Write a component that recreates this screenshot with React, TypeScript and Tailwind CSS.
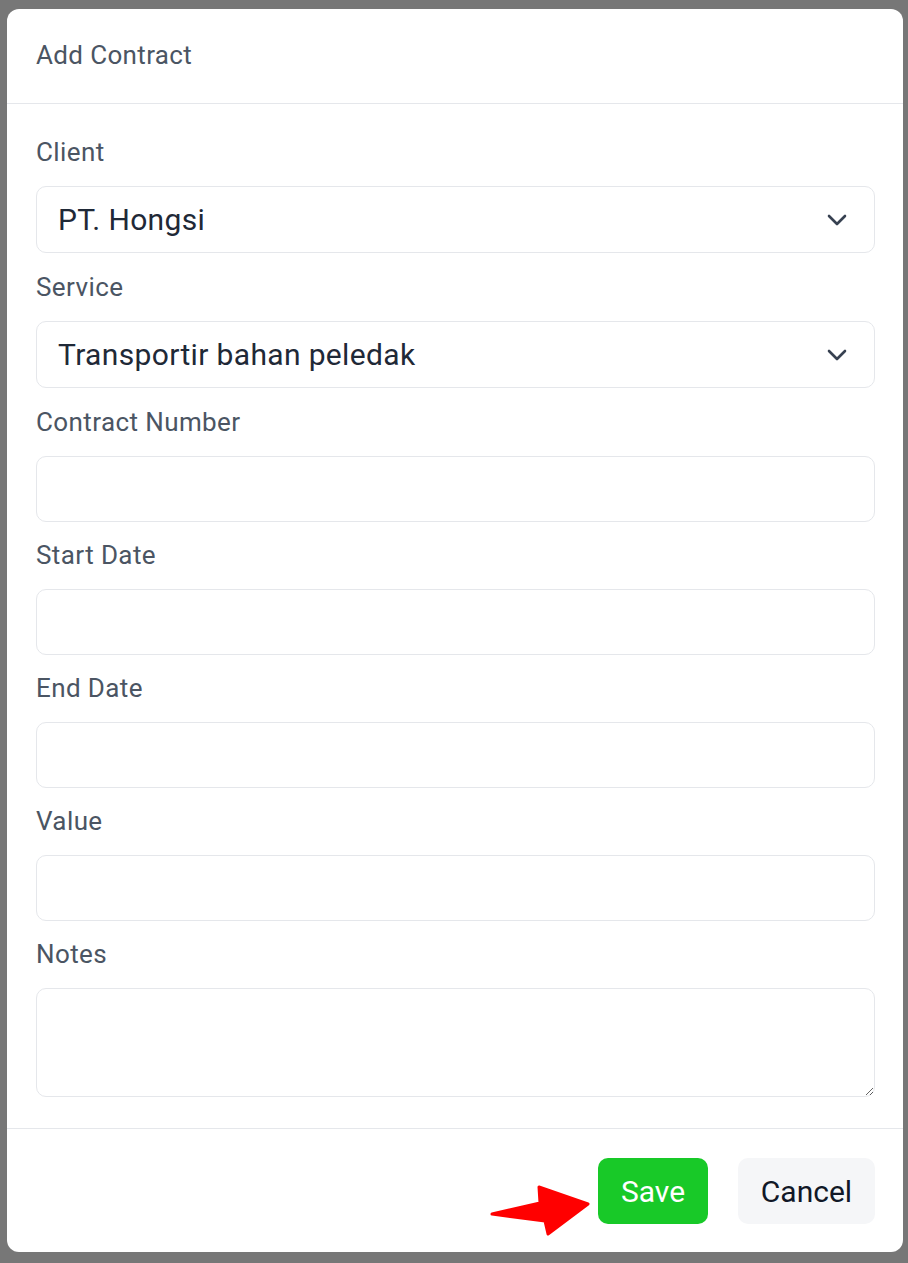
import { useState } from "react";

const fields = [
  { label: "Contract Number", name: "number" },
  { label: "Start Date", name: "start" },
  { label: "End Date", name: "end" },
  { label: "Value", name: "value" },
];

function Chevron() {
  return (
    <svg
      width="20"
      height="12"
      viewBox="0 0 20 12"
      fill="none"
      className="pointer-events-none absolute right-[28px] top-1/2 -translate-y-1/2"
    >
      <path
        d="M2 2l8 8 8-8"
        stroke="#374151"
        strokeWidth="2.6"
        strokeLinecap="round"
        strokeLinejoin="round"
      />
    </svg>
  );
}

export default function App() {
  const [form, setForm] = useState({
    client: "PT. Hongsi",
    service: "Transportir bahan peledak",
    number: "",
    start: "",
    end: "",
    value: "",
    notes: "",
  });

  function handleChange(
    event: React.ChangeEvent<HTMLInputElement | HTMLSelectElement | HTMLTextAreaElement>
  ) {
    const { name, value } = event.target;
    setForm((prev) => ({ ...prev, [name]: value }));
  }

  return (
    <div className="min-h-screen bg-[#777777] pt-[9px] pl-[7px] font-['Roboto',sans-serif]">
      <div className="flex h-[1243px] w-[896px] flex-col rounded-[12px] bg-white">
        <div className="flex h-[95px] items-center border-b border-[#e5e7eb] px-[29px] pb-[2px]">
          <h2 className="text-[26px] tracking-[0.35px] text-[#4b5563]">Add Contract</h2>
        </div>

        <form className="flex flex-1 flex-col pl-[29px] pr-[28px] pt-[32px]">
          <label className="mb-[17px] h-[33px] text-[26px] leading-[33px] tracking-[0.4px] text-[#4b5563]">
            Client
          </label>
          <div className="relative mb-[18px]">
            <select
              name="client"
              value={form.client}
              onChange={handleChange}
              className="h-[67px] w-full appearance-none rounded-[10px] border border-[#e5e7eb] bg-white pl-[21px] text-[30px] tracking-[0.35px] text-[#1f2937] outline-none"
            >
              <option>PT. Hongsi</option>
            </select>
            <Chevron />
          </div>

          <label className="mb-[17px] h-[33px] text-[26px] leading-[33px] tracking-[0.4px] text-[#4b5563]">
            Service
          </label>
          <div className="relative mb-[18px]">
            <select
              name="service"
              value={form.service}
              onChange={handleChange}
              className="h-[67px] w-full appearance-none rounded-[10px] border border-[#e5e7eb] bg-white pl-[21px] text-[30px] tracking-[0.35px] text-[#1f2937] outline-none"
            >
              <option>Transportir bahan peledak</option>
            </select>
            <Chevron />
          </div>

          {fields.map((f) => (
            <div key={f.name} className="flex flex-col">
              <label className="mb-[17px] h-[33px] text-[26px] leading-[33px] tracking-[0.4px] text-[#4b5563]">
                {f.label}
              </label>
              <input
                name={f.name}
                value={form[f.name as keyof typeof form]}
                onChange={handleChange}
                className="mb-[17px] h-[66px] w-full rounded-[10px] border border-[#e5e7eb] px-[21px] text-[30px] text-[#1f2937] outline-none"
              />
            </div>
          ))}

          <label className="mb-[17px] h-[33px] text-[26px] leading-[33px] tracking-[0.4px] text-[#4b5563]">
            Notes
          </label>
          <textarea
            name="notes"
            value={form.notes}
            onChange={handleChange}
            className="h-[109px] w-full rounded-[10px] border border-[#e5e7eb] px-[21px] py-2 text-[30px] text-[#1f2937] outline-none"
          />
        </form>

        <div className="relative flex justify-end gap-[30px] border-t border-[#e5e7eb] pb-[28px] pr-[28px] pt-[29px]">
          <svg
            width="110"
            height="60"
            viewBox="0 0 110 60"
            className="absolute left-[478px] top-[52px]"
          >
            <path
              d="M7 33 L55 22 L54 6 L103 23 L63 53 L60 40 Z"
              fill="#ff0000"
              stroke="#ff0000"
              strokeWidth="3"
              strokeLinejoin="round"
            />
          </svg>
          <button
            type="button"
            className="h-[66px] w-[110px] rounded-[10px] bg-[#18c928] text-[30px] text-white"
          >
            Save
          </button>
          <button
            type="button"
            className="h-[66px] w-[137px] rounded-[10px] bg-[#f5f6f8] text-[30px] text-[#111827]"
          >
            Cancel
          </button>
        </div>
      </div>
    </div>
  );
}
